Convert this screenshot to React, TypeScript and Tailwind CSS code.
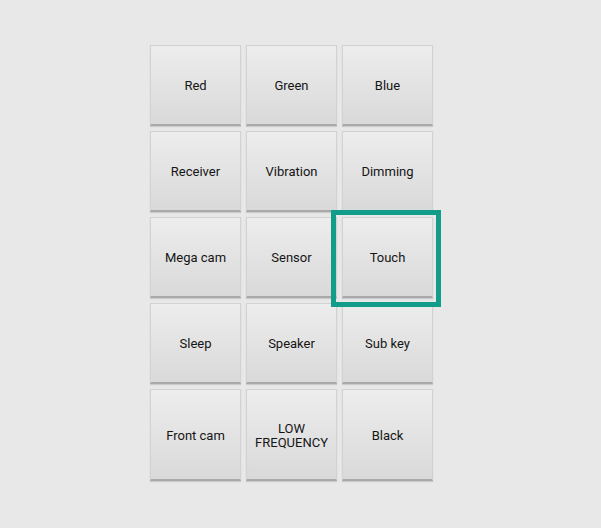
const labels: string[][] = [
  ["Red", "Green", "Blue"],
  ["Receiver", "Vibration", "Dimming"],
  ["Mega cam", "Sensor", "Touch"],
  ["Sleep", "Speaker", "Sub key"],
  ["Front cam", "LOW\nFREQUENCY", "Black"],
];

function Key({ label }: { label: string }) {
  return (
    <div className="flex items-center justify-center pt-[2px] whitespace-pre-line text-center text-[13px] leading-[14px] text-[#151515] bg-gradient-to-b from-[#ededed] to-[#d9d9d9] border border-[#d2d2d2] border-b-2 border-b-[#a9a9a9] shadow-[0_1px_1px_rgba(0,0,0,0.12)]">
      {label}
    </div>
  );
}

export default function App() {
  return (
    <div
      className="relative w-[601px] h-[528px] bg-[#e8e8e8] pl-[150px] pt-[45px]"
      style={{ fontFamily: "Roboto, 'Liberation Sans', sans-serif" }}
    >
      <div className="grid grid-cols-[91px_91px_91px] grid-rows-[81px_81px_81px_81px_92px] gap-x-[5px] gap-y-[5px]">
        {labels.flat().map((l) => (
          <Key key={l} label={l} />
        ))}
      </div>
      {/* focus ring around Touch */}
      <div className="absolute left-[331px] top-[210px] w-[110px] h-[97px] border-[5px] border-[#119d8a] pointer-events-none" />
    </div>
  );
}
